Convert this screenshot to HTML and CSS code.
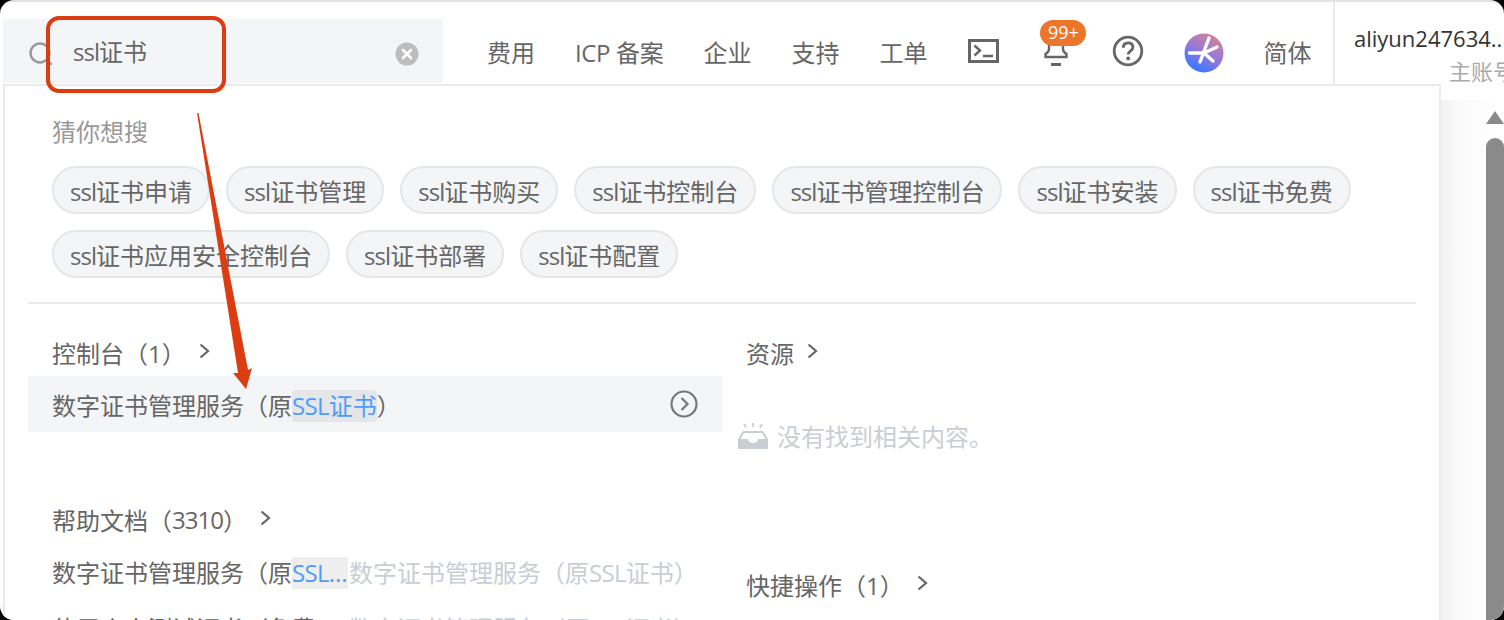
FILE: index.html
```html
<!DOCTYPE html>
<html lang="zh-CN">
<head>
<meta charset="utf-8">
<title>ssl证书</title>
<link rel="stylesheet" href="styles.css">
</head>
<body>
<div class="window">
  <header class="topbar">
    <div class="search">
      <svg class="search-icon" width="26" height="26" viewBox="0 0 26 26"><circle cx="12" cy="12" r="9.500" fill="none" stroke="#999" stroke-width="2.400"/><path d="M19 19l4 4" stroke="#999" stroke-width="2.400" stroke-linecap="round"/></svg>
      <span class="search-text"><span class="lat">ssl</span>证书</span>
      <svg class="clear-icon" width="24" height="24" viewBox="0 0 24 24"><circle cx="12" cy="12" r="11.500" fill="#bdbdbd"/><path d="M8 8l8 8M16 8l-8 8" stroke="#fff" stroke-width="2.600" stroke-linecap="round"/></svg>
    </div>
    <nav class="nav">
      <a class="nav-item">费用</a>
      <a class="nav-item icp">ICP 备案</a>
      <a class="nav-item">企业</a>
      <a class="nav-item">支持</a>
      <a class="nav-item">工单</a>
      <svg class="terminal" width="31" height="24" viewBox="0 0 31 24"><rect x="1.500" y="1.500" width="28" height="21" fill="none" stroke="#666" stroke-width="3"/><path d="M6.500 6.500l5.500 5-5.500 5" fill="none" stroke="#666" stroke-width="2.400"/><path d="M15 17h10" stroke="#666" stroke-width="2.400"/></svg>
      <div class="bell">
        <svg width="24" height="30" viewBox="0 0 24 30"><path d="M5 3v9q0 3-3.500 5v3h21v-3q-3.500-2-3.500-5V3" fill="none" stroke="#666" stroke-width="2.400"/><path d="M7 27.500h10" stroke="#666" stroke-width="3"/></svg>
        <span class="badge">99+</span>
      </div>
      <svg class="help" width="32" height="32" viewBox="0 0 32 32"><circle cx="16" cy="16" r="13.800" fill="none" stroke="#666" stroke-width="2.800"/><path d="M11.300 12.800c0-3.200 2-5 4.900-5s4.700 1.800 4.700 4.400c0 3.700-4.700 3.600-4.700 7.300" fill="none" stroke="#666" stroke-width="2.800"/><circle cx="16.200" cy="23.400" r="1.900" fill="#666"/></svg>
      <svg class="avatar" width="40" height="40" viewBox="0 0 40 40"><defs><linearGradient id="av" x1="0.850" y1="0.100" x2="0.400" y2="0.950"><stop offset="0" stop-color="#cf8496"/><stop offset="0.500" stop-color="#9a78d8"/><stop offset="1" stop-color="#3f78ff"/></linearGradient></defs><circle cx="20" cy="20" r="19.500" fill="url(#av)"/><path d="M25 5l-9 24M5.500 20H20M20 20l13-6M20 20l9 8" stroke="#fff" stroke-width="3.400" stroke-linecap="round" fill="none"/></svg>
      <a class="nav-item lang">简体</a>
    </nav>
    <div class="user">
      <div class="user-name">aliyun247634..</div>
      <div class="user-role">主账号</div>
    </div>
  </header>

  <section class="panel">
    <h3 class="guess-title">猜你想搜</h3>
    <div class="chips">
      <span class="chip"><span class="lat">ssl</span>证书申请</span>
      <span class="chip"><span class="lat">ssl</span>证书管理</span>
      <span class="chip"><span class="lat">ssl</span>证书购买</span>
      <span class="chip"><span class="lat">ssl</span>证书控制台</span>
      <span class="chip"><span class="lat">ssl</span>证书管理控制台</span>
      <span class="chip"><span class="lat">ssl</span>证书安装</span>
      <span class="chip"><span class="lat">ssl</span>证书免费</span>
      <span class="chip"><span class="lat">ssl</span>证书应用安全控制台</span>
      <span class="chip"><span class="lat">ssl</span>证书部署</span>
      <span class="chip"><span class="lat">ssl</span>证书配置</span>
    </div>
    <hr class="rule">
    <div class="columns">
      <div class="col-left">
        <div class="group-title">控制台（1）<svg class="chev" width="14" height="18" viewBox="0 0 14 18"><path d="M2.500 2.500L10 9l-7.500 6.500" fill="none" stroke="#666" stroke-width="2.200"/></svg></div>
        <div class="result active">
          <span class="result-text">数字证书管理服务（原<mark class="hit"><span class="lat">SSL</span>证书</mark>）</span>
          <svg class="go" width="28" height="28" viewBox="0 0 28 28"><circle cx="14" cy="14" r="12.500" fill="none" stroke="#777" stroke-width="2.200"/><path d="M11.500 8l6 6-6 6" fill="none" stroke="#777" stroke-width="2.200"/></svg>
        </div>
        <div class="group-title docs">帮助文档（<span class="lat">3310</span>）<svg class="chev" width="14" height="18" viewBox="0 0 14 18"><path d="M2.500 2.500L10 9l-7.500 6.500" fill="none" stroke="#666" stroke-width="2.200"/></svg></div>
        <div class="doc-row"><span class="doc-main">数字证书管理服务（原<mark class="hit short"><span class="lat">SSL</span>...</mark></span><span class="doc-sub">数字证书管理服务（原<span class="lat">SSL</span>证书）</span></div>
        <div class="doc-row next"><span class="doc-main">使用个人测试证书（免费...</span><span class="doc-sub">数字证书管理服务（原<span class="lat">SSL</span>证书）</span></div>
      </div>
      <div class="col-right">
        <div class="group-title">资源<svg class="chev" width="14" height="18" viewBox="0 0 14 18"><path d="M2.500 2.500L10 9l-7.500 6.500" fill="none" stroke="#666" stroke-width="2.200"/></svg></div>
        <div class="empty">
          <svg width="32" height="26" viewBox="0 0 32 26"><path d="M7 1l2 3.500M16 0v4M25 1l-2 3.500" stroke="#c9ced3" stroke-width="1.800"/><path d="M6 8h20l5 8v10H1V16z" fill="#c9ced3"/><path d="M7 10h18l3.500 6H21a5 4 0 0 1-10 0H3.500z" fill="#fff"/></svg>
          <span>没有找到相关内容。</span>
        </div>
        <div class="group-title quick">快捷操作（1）<svg class="chev" width="14" height="18" viewBox="0 0 14 18"><path d="M2.500 2.500L10 9l-7.500 6.500" fill="none" stroke="#666" stroke-width="2.200"/></svg></div>
      </div>
    </div>
  </section>

  <div class="scrollbar">
    <span class="scroll-up"></span>
    <span class="scroll-thumb"></span>
  </div>

  <div class="callout"></div>
  <svg class="arrow" width="70" height="290" viewBox="0 0 70 290"><path d="M7 3L8.500 3 58 260 62 258 56 279 43 263 48 263z" fill="#dc3c12"/></svg>
</div>
</body>
</html>
```
FILE: styles.css
```css
* { box-sizing: border-box; }
html, body { margin: 0; padding: 0; background: #000; }
body {
  width: 1504px;
  height: 620px;
  overflow: hidden;
  font-family: "Open Sans", "Noto Sans CJK SC", sans-serif;
  color: #666;
}
.window {
  position: relative;
  width: 1504px;
  height: 620px;
  overflow: hidden;
  background: #fff;
  border-top: 2px solid #e4e4e4;
  border-radius: 14px;
}
.lat { letter-spacing: -.95px; }
.hit .lat, .doc-sub .lat { letter-spacing: -.7px; }
.topbar {
  display: flex;
  align-items: flex-start;
  height: 82px;
  padding-left: 3px;
}
.search {
  flex: none;
  display: flex;
  align-items: center;
  width: 440px;
  height: 64px;
  margin-top: 17px;
  padding: 0 24px 0 25px;
  background: #f4f5f7;
  color: #666;
  font-size: 24px;
}
.search-icon { flex: none; margin-top: 6px; }
.search-text { flex: 1; margin-left: 19px; margin-top: -2px; }
.clear-icon { flex: none; margin-top: 6px; }
.nav {
  flex: none;
  display: flex;
  align-items: center;
  height: 90px;
  width: 892px;
  padding-left: 44px;
  padding-top: 12px;
  font-size: 24px;
  border-right: 2px solid #ebebeb;
}
.nav-item { color: #666; white-space: nowrap; margin-right: 40px; margin-bottom: 4px; }
.icp { letter-spacing: -.35px; }
.terminal { flex: none; margin-left: 1px; margin-right: 45px; margin-bottom: 4px; }
.bell {
  position: relative;
  flex: none;
  width: 24px;
  height: 30px;
  margin-right: 44px;
  margin-bottom: 2px;
}
.bell svg { display: block; }
.badge {
  position: absolute;
  left: -4px;
  top: -17px;
  width: 46px;
  height: 26px;
  border-radius: 13px;
  background: #ec752c;
  color: #fff;
  font-size: 18px;
  line-height: 25px;
  text-align: center;
}
.help { flex: none; margin-right: 40px; margin-bottom: 4px; }
.avatar { flex: none; margin-right: 39px; }
.lang { margin-right: 0; }
.user {
  flex: none;
  padding: 18px 0 0 19px;
  white-space: nowrap;
}
.user-name { font-size: 22px; line-height: 36px; color: #333; }
.user-role { font-size: 22px; line-height: 30px; color: #aaa; margin-left: 95px; }
.panel {
  position: absolute;
  left: 3px;
  top: 82px;
  width: 1438px;
  height: 560px;
  background: #fff;
  border: 2px solid #ebebeb;
  padding: 0 23px;
}
.guess-title {
  margin: 30px 0 0 24px;
  font-size: 24px;
  font-weight: 400;
  line-height: 32px;
  color: #999;
}
.chips {
  display: flex;
  flex-wrap: wrap;
  gap: 16px;
  margin: 18px 0 0 24px;
  width: 1320px;
}
.chip {
  height: 48px;
  line-height: 47px;
  padding: 0 16px;
  border: 2px solid #e5e6e8;
  border-radius: 24px;
  background: #f4f5f7;
  font-size: 24px;
  color: #666;
  white-space: nowrap;
}
.rule {
  margin: 24px 0 0;
  height: 2px;
  border: 0;
  background: #ebebeb;
}
.columns { display: flex; }
.col-left { width: 694px; flex: none; }
.col-right { flex: 1; padding: 0 0 0 24px; }
.group-title {
  display: flex;
  align-items: center;
  margin-top: 28px;
  padding-left: 24px;
  height: 40px;
  font-size: 24px;
  color: #666;
}
.col-right .group-title { padding-left: 0; }
.chev { margin-left: 12px; margin-top: -2px; }
.result {
  display: flex;
  align-items: center;
  justify-content: space-between;
  height: 56px;
  margin-top: 4px;
  padding: 0 24px;
  background: #f4f5f7;
  font-size: 24px;
}
.hit {
  display: inline-block;
  height: 32px;
  line-height: 32px;
  background: #e5e6e8;
  color: #4e9bff;
  border-radius: 4px;
}
.hit.short { background: #eee; border-radius: 0; }
.docs { margin-top: 67px; }
.doc-row {
  display: flex;
  height: 40px;
  align-items: center;
  padding-left: 24px;
  font-size: 24px;
  white-space: nowrap;
  margin-top: 12px;
}
.doc-main {
  flex: none;
  width: 297px;
  overflow: hidden;
  text-overflow: ellipsis;
}
.doc-row.next { margin-top: 16px; }
.doc-sub { color: #c8ced4; }
.empty {
  display: flex;
  align-items: center;
  gap: 8px;
  margin: 46px 0 0 -9px;
  font-size: 24px;
  color: #c8ced4;
}
.quick { margin-top: 111px; }
.scrollbar {
  position: absolute;
  left: 1441px;
  top: 98px;
  width: 63px;
  height: 520px;
  background: linear-gradient(90deg, #f2f2f2 0, #fafafa 20px, #fff 60px);
}
.scroll-up {
  position: absolute;
  left: 45px;
  top: 11px;
  width: 0;
  height: 0;
  border-left: 9px solid transparent;
  border-right: 9px solid transparent;
  border-bottom: 13px solid #8a8a8a;
}
.scroll-thumb {
  position: absolute;
  left: 45px;
  top: 38px;
  width: 18px;
  height: 482px;
  border-radius: 9px 9px 0 0;
  background: #8a8a8a;
}
.callout {
  position: absolute;
  left: 46px;
  top: 14px;
  width: 180px;
  height: 77px;
  border: 4px solid #dc3c12;
  border-radius: 13px;
}
.arrow {
  position: absolute;
  left: 190px;
  top: 108px;
}
```
